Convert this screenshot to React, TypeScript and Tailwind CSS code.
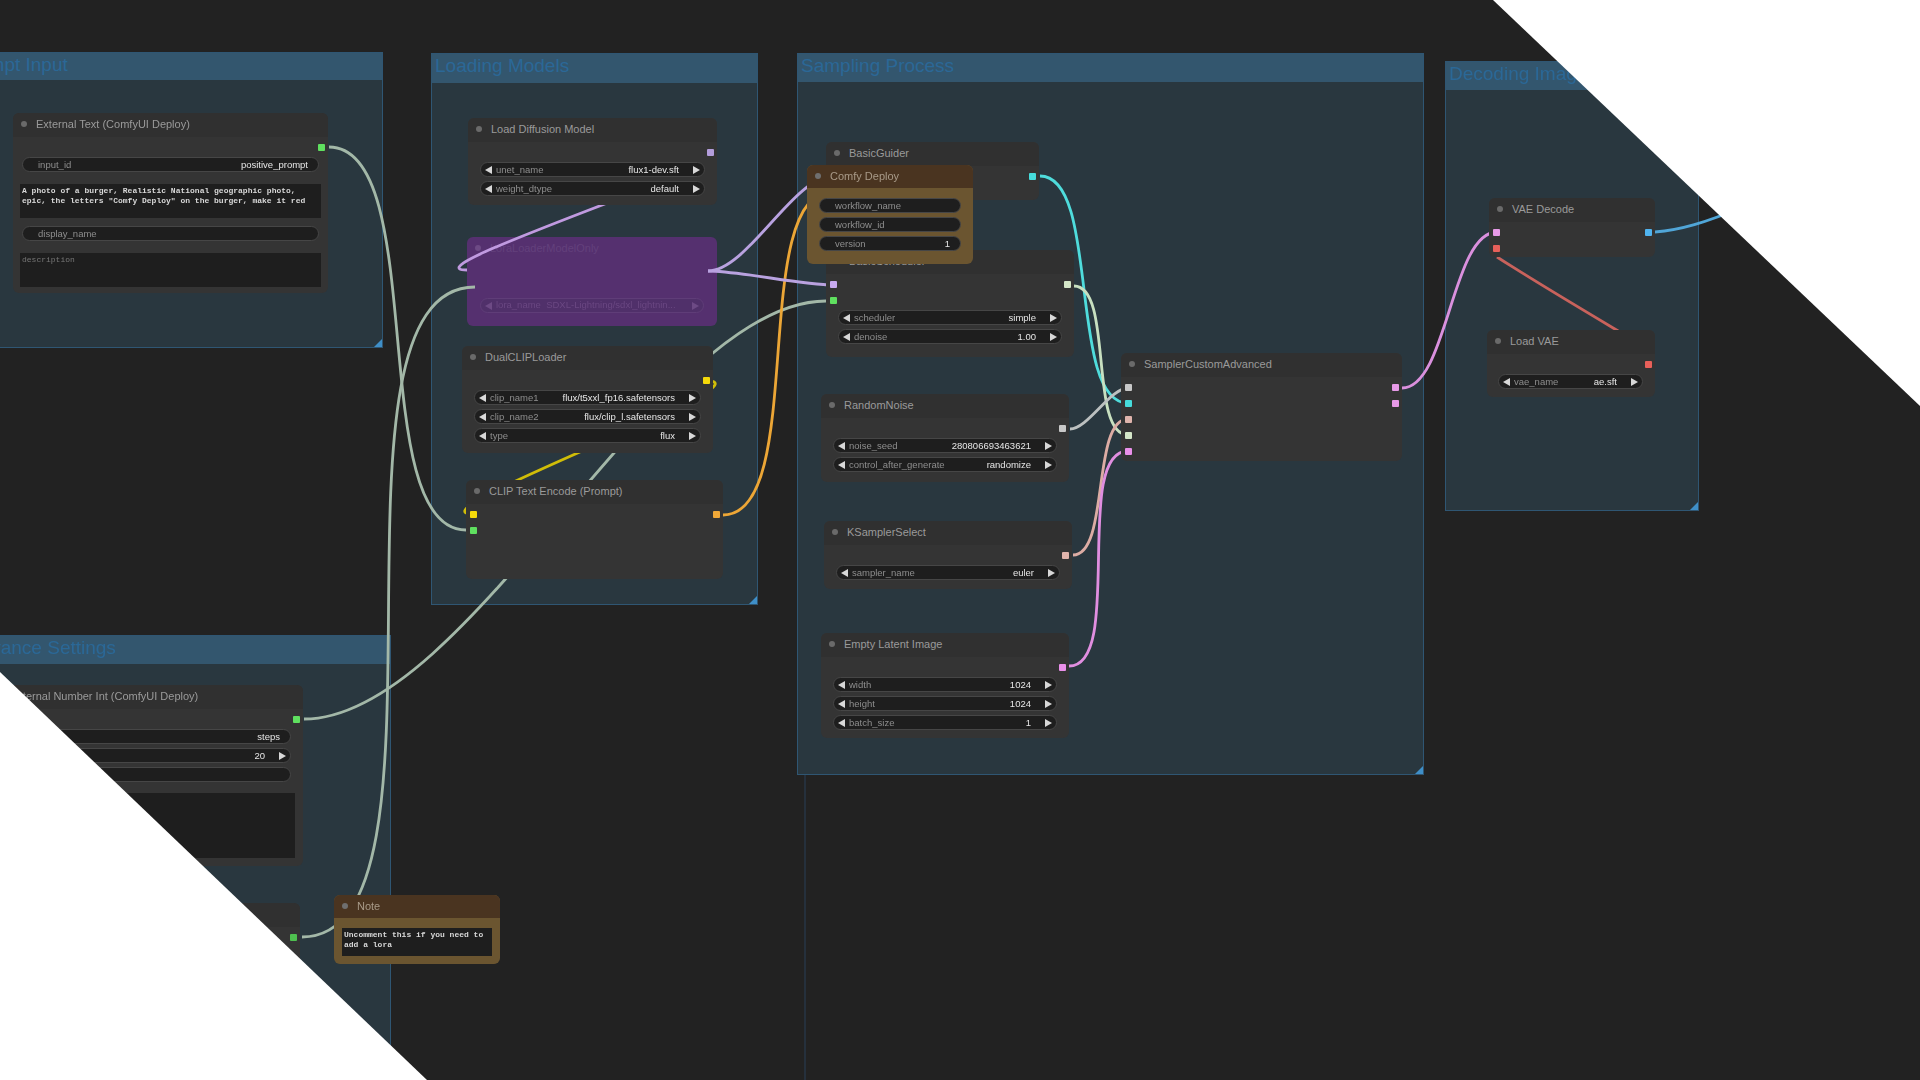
import type { ReactNode } from "react";

const sans = "font-['Liberation_Sans',Arial,sans-serif]";
const mono = "font-['Liberation_Mono','Courier_New',monospace]";

// same curve comfyui draws between two slots
function wirePath(x1: number, y1: number, x2: number, y2: number) {
  const off = Math.hypot(x2 - x1, y2 - y1) * 0.25;
  return `M${x1} ${y1} C${x1 + off} ${y1} ${x2 - off} ${y2} ${x2} ${y2}`;
}

const wires: [number, number, number, number, string][] = [
  [329, 147, 466, 530, "#a3b8a8"],
  [304, 719, 826, 301, "#a3b8a8"],
  [302, 937, 475, 287, "#a3b8a8"],
  [706, 152, 467, 270, "#c09ae0"],
  [707, 381, 473, 514, "#d0bd08"],
  [723, 515, 833, 191, "#eca636"],
  [708, 271, 833, 176, "#b9a2e0"],
  [708, 271, 833, 285, "#b9a2e0"],
  [1040, 176, 1128, 403, "#4fdcdc"],
  [1074, 286, 1128, 435, "#c8e0c0"],
  [1070, 429, 1128, 388, "#bcc0c0"],
  [1073, 555, 1128, 419, "#dcaca4"],
  [1069, 666, 1128, 451, "#e08ee0"],
  [1402, 388, 1497, 232, "#da90de"],
];

function Wires() {
  return (
    <svg width="1920" height="1080" className="absolute left-0 top-0" fill="none">
      {wires.map(([a, b, c, d, color], i) => (
        <path key={i} d={wirePath(a, b, c, d)} stroke={color} strokeWidth="2.8" />
      ))}
      <path d="M1650 350 C1600 320 1540 285 1497 257" stroke="#c8625c" strokeWidth="2.8" />
      <path d="M1655 232 C1680 230 1705 223 1745 206" stroke="#50a6d8" strokeWidth="2.8" />
    </svg>
  );
}

function Group({ pos, title, header }: { pos: string; title: string; header: string }) {
  return (
    <div className={`absolute ${pos} border-[1.5px] border-[#2f5673] bg-[#29373f]`}>
      <div className={`${header} bg-[#33566e] pl-[3px] text-[19px] leading-[23px] text-[#2b6897] whitespace-nowrap overflow-hidden`}>
        {title}
      </div>
      <div className="absolute bottom-0 right-0 h-2 w-2 bg-[#3f8fc8] [clip-path:polygon(100%_0,100%_100%,0_100%)]" />
    </div>
  );
}

function Port({ color }: { color: string }) {
  return <span className={`block h-[7px] w-[7px] rounded-[1px] ${color}`} />;
}

function SlotRow({ left, right }: { left?: string; right?: string }) {
  return (
    <div className="flex h-4 items-center justify-between px-[3.5px]">
      {left ? <Port color={left} /> : <span />}
      {right ? <Port color={right} /> : <span />}
    </div>
  );
}

function Arrow({ flip, color = "fill-[#d8d8d8]" }: { flip?: boolean; color?: string }) {
  return (
    <svg width="7" height="8" viewBox="0 0 7 8" className={`shrink-0 ${color}`}>
      <polygon points={flip ? "0,0 7,4 0,8" : "7,0 0,4 7,8"} />
    </svg>
  );
}

function Pill({ label, value, arrows = true }: { label: string; value?: string; arrows?: boolean }) {
  return (
    <div className="flex h-[15px] items-center gap-1 rounded-full border border-[#464646] bg-[#1e1e1e] px-1 text-[9.5px] leading-none">
      {arrows ? <Arrow /> : <span className="w-[7px]" />}
      <span className="text-[#8e8e8e] whitespace-nowrap">{label}</span>
      <span className={`ml-auto text-[#e6e6e6] whitespace-nowrap ${arrows ? "pr-[10px]" : "pr-[6px]"}`}>{value}</span>
      {arrows && <Arrow flip />}
    </div>
  );
}

function TextBox({ h, children, dim }: { h: string; children?: ReactNode; dim?: boolean }) {
  return (
    <div className={`${h} ${mono} bg-[#1e1e1e] px-[2px] pt-[2px] text-[8px] leading-[10px] ${dim ? "text-[#777]" : "font-bold text-[#d8d8d8]"}`}>
      {children}
    </div>
  );
}

function Node({
  pos,
  title,
  rows,
  children,
  inset = "px-3",
}: {
  pos: string;
  title?: string;
  rows?: ReactNode;
  children?: ReactNode;
  inset?: string;
}) {
  return (
    <div className={`absolute ${pos} overflow-hidden rounded-md bg-[#343434]`}>
      <div className="flex h-6 items-center gap-[9px] bg-[#303030] pb-[2px] pl-2 text-[11px] text-[#9a9a9a] whitespace-nowrap">
        <span className="h-[6px] w-[6px] rounded-full bg-[#6a6a6a]" />
        {title}
      </div>
      <div className="pt-[2px]">{rows}</div>
      <div className={`flex flex-col gap-1 pt-[2px] ${inset}`}>{children}</div>
    </div>
  );
}

function NoteBox({ pos, title, children }: { pos: string; title: string; children: ReactNode }) {
  return (
    <div className={`absolute ${pos} overflow-hidden rounded-md bg-[#6b5530]`}>
      <div className="flex h-[23px] items-center gap-[9px] bg-[#4a3420] pb-[1px] pl-2 text-[11px] text-[#a89a88]">
        <span className="h-[6px] w-[6px] rounded-full bg-[#6f6f6f]" />
        {title}
      </div>
      {children}
    </div>
  );
}

export default function App() {
  return (
    <div className={`relative h-[1080px] w-[1920px] overflow-hidden bg-[#222222] ${sans}`}>
      <div className="absolute inset-0 blur-[0.75px]">
        <div className="absolute left-[804px] top-[775px] h-[305px] w-[1.5px] bg-[#25303c]" />

        <Group pos="left-[-45px] top-[52px] w-[428px] h-[296px]" title="Prompt Input" header="h-[27px]" />
        <Group pos="left-[431px] top-[53px] w-[327px] h-[552px]" title="Loading Models" header="h-[29px]" />
        <Group pos="left-[797px] top-[53px] w-[627px] h-[722px]" title="Sampling Process" header="h-[28px]" />
        <Group pos="left-[1445px] top-[61px] w-[254px] h-[450px]" title="Decoding Images" header="h-[28px]" />
        <Group pos="left-[-36px] top-[635px] w-[427px] h-[520px]" title="Advance Settings" header="h-[28px]" />

        {/* bypassed node sits under the wires */}
        <div className="absolute left-[467px] top-[237px] h-[89px] w-[250px] rounded-md bg-[#55306f] px-[13px] text-[9.5px] text-[#6a4782]">
          <div className="-ml-[5px] flex h-6 items-center gap-[9px] pb-[2px] text-[11px] text-[#63407c]">
            <span className="h-[6px] w-[6px] rounded-full bg-[#6d4a85]" />
            LoraLoaderModelOnly
          </div>
          <div className="mt-[37px] flex h-[15px] items-center gap-1 rounded-full border border-[#5f3d78] bg-[#50306a] px-1">
            <Arrow color="fill-[#6d4a85]" />
            <span className="min-w-0 flex-1 truncate">lora_name&nbsp;&nbsp;SDXL-Lightning/sdxl_lightnin...</span>
            <Arrow flip color="fill-[#6d4a85]" />
          </div>
        </div>

        <Wires />

        <Node
          pos="left-[13px] top-[113px] w-[315px] h-[180px]"
          title="External Text (ComfyUI Deploy)"
          rows={<SlotRow right="bg-[#5fe05f]" />}
          inset="px-[7px]"
        >
          <div className="mx-[2px]">
            <Pill label="input_id" value="positive_prompt" arrows={false} />
          </div>
          <div className="h-1" />
          <TextBox h="h-[34px]">
            A photo of a burger, Realistic National geographic photo,
            <br />
            epic, the letters "Comfy Deploy" on the burger, make it red
          </TextBox>
          <div className="mx-[2px] mt-[4px]">
            <Pill label="display_name" arrows={false} />
          </div>
          <div className="h-1" />
          <TextBox h="h-[34px]" dim>
            description
          </TextBox>
        </Node>

        <Node pos="left-[468px] top-[118px] w-[249px] h-[87px]" title="Load Diffusion Model" rows={<SlotRow right="bg-[#b39ddb]" />}>
          <Pill label="unet_name" value="flux1-dev.sft" />
          <Pill label="weight_dtype" value="default" />
        </Node>

        <Node pos="left-[462px] top-[346px] w-[251px] h-[107px]" title="DualCLIPLoader" rows={<SlotRow right="bg-[#f5d90a]" />}>
          <Pill label="clip_name1" value="flux/t5xxl_fp16.safetensors" />
          <Pill label="clip_name2" value="flux/clip_l.safetensors" />
          <Pill label="type" value="flux" />
        </Node>

        <Node
          pos="left-[466px] top-[480px] w-[257px] h-[99px]"
          title="CLIP Text Encode (Prompt)"
          rows={
            <>
              <SlotRow left="bg-[#f5d90a]" right="bg-[#f0a838]" />
              <SlotRow left="bg-[#5fe05f]" />
            </>
          }
        />

        <Node pos="left-[826px] top-[142px] w-[213px] h-[58px]" title="BasicGuider" rows={<SlotRow right="bg-[#46dcdc]" />} />

        <Node
          pos="left-[826px] top-[250px] w-[248px] h-[107px]"
          title="BasicScheduler"
          rows={
            <>
              <SlotRow left="bg-[#c8aaf0]" right="bg-[#d4e6c8]" />
              <SlotRow left="bg-[#5fe05f]" />
            </>
          }
        >
          <Pill label="scheduler" value="simple" />
          <Pill label="denoise" value="1.00" />
        </Node>

        <NoteBox pos="left-[807px] top-[165px] w-[166px] h-[99px]" title="Comfy Deploy">
          <div className="flex flex-col gap-1 px-3 pt-[10px]">
            <Pill label="workflow_name" arrows={false} />
            <Pill label="workflow_id" arrows={false} />
            <Pill label="version" value="1" arrows={false} />
          </div>
        </NoteBox>

        <Node pos="left-[821px] top-[394px] w-[248px] h-[88px]" title="RandomNoise" rows={<SlotRow right="bg-[#c8c8c8]" />}>
          <Pill label="noise_seed" value="280806693463621" />
          <Pill label="control_after_generate" value="randomize" />
        </Node>

        <Node pos="left-[824px] top-[521px] w-[248px] h-[68px]" title="KSamplerSelect" rows={<SlotRow right="bg-[#e0b4ac]" />}>
          <Pill label="sampler_name" value="euler" />
        </Node>

        <Node pos="left-[821px] top-[633px] w-[248px] h-[105px]" title="Empty Latent Image" rows={<SlotRow right="bg-[#ea90ea]" />}>
          <Pill label="width" value="1024" />
          <Pill label="height" value="1024" />
          <Pill label="batch_size" value="1" />
        </Node>

        <Node
          pos="left-[1121px] top-[353px] w-[281px] h-[108px]"
          title="SamplerCustomAdvanced"
          rows={
            <>
              <SlotRow left="bg-[#c8c8c8]" right="bg-[#e89ae8]" />
              <SlotRow left="bg-[#46dcdc]" right="bg-[#e89ae8]" />
              <SlotRow left="bg-[#e0b4ac]" />
              <SlotRow left="bg-[#d4e6c8]" />
              <SlotRow left="bg-[#ea90ea]" />
            </>
          }
        />

        <Node
          pos="left-[1489px] top-[198px] w-[166px] h-[59px]"
          title="VAE Decode"
          rows={
            <>
              <SlotRow left="bg-[#e89ae8]" right="bg-[#50b4f0]" />
              <SlotRow left="bg-[#e8605a]" />
            </>
          }
        />

        <Node pos="left-[1487px] top-[330px] w-[168px] h-[67px]" title="Load VAE" rows={<SlotRow right="bg-[#e8605a]" />} inset="pl-[11px] pr-[12px]">
          <Pill label="vae_name" value="ae.sft" />
        </Node>

        <Node
          pos="left-[-13px] top-[685px] w-[316px] h-[181px]"
          title="External Number Int (ComfyUI Deploy)"
          rows={<SlotRow right="bg-[#5fe05f]" />}
          inset="pl-[12px] pr-[8px]"
        >
          <div className="pr-[4px]">
            <Pill label="input_id" value="steps" arrows={false} />
          </div>
          <div className="pr-[4px]">
            <Pill label="default_value" value="20" />
          </div>
          <div className="pr-[4px]">
            <Pill label="display_name" arrows={false} />
          </div>
          <div className="h-[3px]" />
          <TextBox h="h-[65px]" dim>
            description
          </TextBox>
        </Node>

        <Node pos="left-[-13px] top-[903px] w-[313px] h-[110px]" rows={<SlotRow right="bg-[#4fc04f]" />} />

        <NoteBox pos="left-[334px] top-[895px] w-[166px] h-[69px]" title="Note">
          <div className="px-2 pt-[10px]">
            <TextBox h="h-[28px]">
              Uncomment this if you need to
              <br />
              add a lora
            </TextBox>
          </div>
        </NoteBox>
      </div>

      <div className="absolute left-[1493px] top-0 h-[406px] w-[427px] bg-white [clip-path:polygon(0_0,100%_0,100%_100%)]" />
      <div className="absolute bottom-0 left-0 h-[408px] w-[427px] bg-white [clip-path:polygon(0_0,100%_100%,0_100%)]" />
    </div>
  );
}
